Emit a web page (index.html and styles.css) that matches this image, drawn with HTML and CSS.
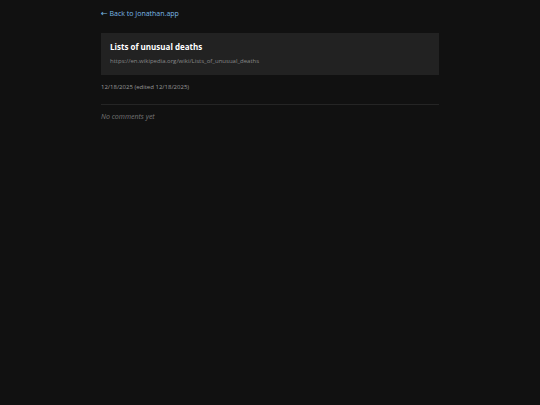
FILE: index.html
```html
<!DOCTYPE html>
<html lang="en">
<head>
    <meta charset="UTF-8">
    <meta name="viewport" content="width=device-width, initial-scale=1.0">
    <title>Lists of unusual deaths</title>
    <link rel="stylesheet" href="styles.css">
</head>
<body>
    <main class="container">
        <a class="back" href="/"><span class="arrow">←</span> Back to Jonathan.app</a>

        <a class="card" href="https://en.wikipedia.org/wiki/Lists_of_unusual_deaths">
            <h1 class="title">Lists of unusual deaths</h1>
            <span class="url">https://en.wikipedia.org/wiki/Lists_of_unusual_deaths</span>
        </a>

        <p class="date">12/18/2025 (edited 12/18/2025)</p>

        <section class="comments">
            <p class="empty">No comments yet</p>
        </section>
    </main>
</body>
</html>
```
FILE: styles.css
```css
* {
    margin: 0;
    padding: 0;
    box-sizing: border-box;
}

body {
    font-family: 'Open Sans', 'Noto Sans', sans-serif;
    background: #111;
    color: #fff;
    min-height: 100vh;
    padding: 8px;
}

.container {
    max-width: 338px;
    margin: 0 auto;
}

.back {
    display: block;
    color: #7ab8e6;
    font-size: 7px;
    line-height: 12px;
    text-decoration: none;
    margin-bottom: 13px;
}

.arrow {
    font-family: 'DejaVu Sans', sans-serif;
    font-size: 8px;
}

.card {
    display: block;
    background: #222;
    padding: 8px 9px 9px;
    text-decoration: none;
    margin-bottom: 7px;
}

.title {
    color: #fff;
    font-size: 8px;
    font-weight: 700;
    line-height: 12px;
    margin-bottom: 3px;
}

.url {
    display: block;
    color: #888;
    font-size: 6px;
    line-height: 10px;
}

.date {
    color: #999;
    font-size: 6px;
    line-height: 10px;
    margin-bottom: 12px;
}

.comments {
    border-top: 1px solid #252525;
    padding-top: 6px;
}

.empty {
    color: #777;
    font-size: 7px;
    font-style: italic;
    line-height: 12px;
}
```
